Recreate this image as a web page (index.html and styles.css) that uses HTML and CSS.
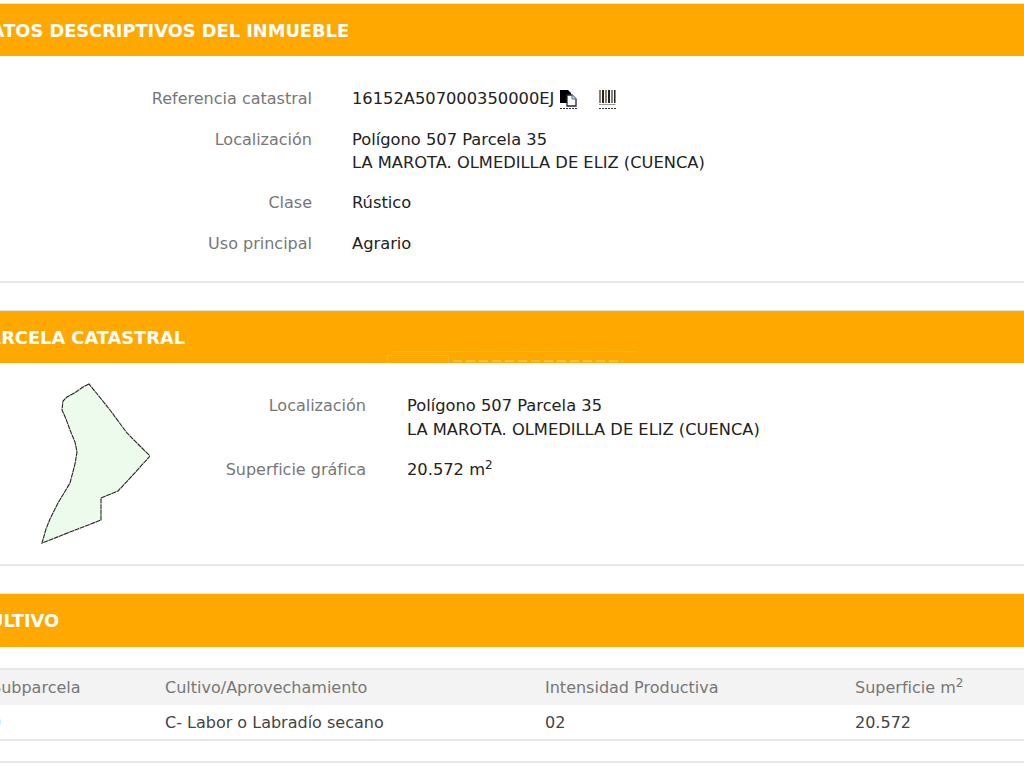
FILE: index.html
```html
<!DOCTYPE html>
<html lang="es">
<head>
  <meta charset="UTF-8" />
  <title>Datos descriptivos del inmueble</title>
  <link rel="stylesheet" href="styles.css">
</head>
<body>
  <div class="page">
    <section class="panel panel-datos">
      <h2 class="panel-title">DATOS DESCRIPTIVOS DEL INMUEBLE</h2>
      <div class="fields">
        <div class="field">
          <span class="label">Referencia catastral</span>
          <div class="value ref">
            <span>16152A507000350000EJ</span>
            <svg class="icon" viewBox="0 0 19 20" width="19" height="20">
              <path d="M1 1h8l3 3v10H1z" fill="#000"/>
              <path d="M8 6h5l4 4v7H8z" fill="#fff" stroke="#1c2740" stroke-width="1.3"/>
              <path d="M13 6v4h4" fill="#dfe8f5" stroke="#3a66b0" stroke-width="1"/>
              <path d="M1 19.5h17" stroke="#333" stroke-width="1" stroke-dasharray="2 1"/>
            </svg>
            <svg class="icon icon-barcode" viewBox="0 0 18 20" width="18" height="20">
              <path d="M1 1h2v13H1zM7 1h2v13H7zM13 1h2v13h-2z" fill="#8a7f70"/>
              <path d="M4 1h2v13H4zM10 1h2v13h-2zM16 1h1.500v13H16z" fill="#222"/>
              <path d="M1 15.500h16.500" stroke="#999" stroke-width="1"/>
              <path d="M1 19.500h17" stroke="#333" stroke-width="1" stroke-dasharray="2 1"/>
            </svg>
          </div>
        </div>
        <div class="field">
          <span class="label">Localización</span>
          <div class="value">Polígono 507 Parcela 35<br>LA MAROTA. OLMEDILLA DE ELIZ (CUENCA)</div>
        </div>
        <div class="field">
          <span class="label">Clase</span>
          <div class="value">Rústico</div>
        </div>
        <div class="field">
          <span class="label">Uso principal</span>
          <div class="value">Agrario</div>
        </div>
      </div>
    </section>

    <section class="panel panel-parcela">
      <h2 class="panel-title">PARCELA CATASTRAL</h2>
      <div class="watermark">
        <div class="watermark-box"></div>
        <div class="watermark-letters"></div>
      </div>
      <div class="parcela-body">
        <svg class="plano" viewBox="0 0 130 170" width="130" height="170">
          <path d="M69 5 L63 8 L56 13 L47 18 L43 22 L42 31 L46 40 L50 51 L55 63 L57 73 L55 85 L50 104 L38 124 L30 140 L26 150 L22 164 L81 141 L81 119 L98 112 L112 97 L130 77 L118 65 L107 54 L90 31 L78 16 Z" fill="#edfbed" stroke="#222" stroke-width="1.1" stroke-dasharray="5 0.6"/>
        </svg>
        <div class="fields fields-parcela">
          <div class="field">
            <span class="label">Localización</span>
            <div class="value">Polígono 507 Parcela 35<br>LA MAROTA. OLMEDILLA DE ELIZ (CUENCA)</div>
          </div>
          <div class="field">
            <span class="label">Superficie gráfica</span>
            <div class="value">20.572 m<sup>2</sup></div>
          </div>
        </div>
      </div>
    </section>

    <section class="panel panel-cultivo">
      <h2 class="panel-title title-cultivo">CULTIVO</h2>
      <div class="cultivo-table">
        <div class="row row-head">
          <span>Subparcela</span>
          <span>Cultivo/Aprovechamiento</span>
          <span>Intensidad Productiva</span>
          <span>Superficie m<sup>2</sup></span>
        </div>
        <div class="row row-body">
          <span class="sub-link">0</span>
          <span>C- Labor o Labradío secano</span>
          <span>02</span>
          <span>20.572</span>
        </div>
      </div>
    </section>
    <div class="panel-end"></div>
  </div>
</body>
</html>
```

FILE: styles.css
```css
html, body {
  margin: 0;
  padding: 0;
  height: 768px;
  overflow: hidden;
  background: #fff;
}

.page {
  width: 1120px;
  margin-left: -40px;
  padding-top: 3px;
  font-family: "DejaVu Sans", Verdana, sans-serif;
  font-size: 16px;
  color: #222;
}

.panel {
  position: relative;
  border-bottom: 2px solid #e8e8e8;
  margin-bottom: 27px;
}

.panel-title {
  margin: 0;
  height: 52px;
  line-height: 53px;
  padding-left: 16px;
  background: #ffa800;
  border-top: 1px solid #e6e6e6;
  color: #fff;
  font-size: 17.8px;
  font-weight: bold;
}

.title-cultivo {
  height: 53px;
}

.fields {
  display: flex;
  flex-direction: column;
  padding: 31px 0 26px;
  gap: 17.5px;
}

.field {
  display: flex;
  gap: 40px;
  line-height: 23px;
}

.label {
  width: 352px;
  text-align: right;
  color: #777;
}

.value {
  font-size: 16.3px;
}

.ref {
  display: flex;
  align-items: center;
}

.icon {
  margin-left: 5px;
}

.icon-barcode {
  margin-left: 20px;
}

sup {
  font-size: 12px;
  line-height: 0;
}

.watermark {
  position: absolute;
  left: 433px;
  top: 41px;
  width: 244px;
  height: 12px;
  border-top: 1px solid rgba(255, 255, 255, 0.14);
}

.watermark-box {
  position: absolute;
  left: -6px;
  top: 3px;
  width: 60px;
  height: 7px;
  border: 1px solid rgba(255, 255, 255, 0.16);
  border-bottom: none;
}

.watermark-letters {
  position: absolute;
  left: 60px;
  top: 8px;
  width: 170px;
  height: 2px;
  background: repeating-linear-gradient(90deg, rgba(255, 255, 255, 0.25) 0 9px, transparent 9px 13px);
}

.parcela-body {
  display: flex;
  height: 201px;
}

.plano {
  margin: 16px 0 0 60px;
}

.fields-parcela {
  padding-top: 31px;
  gap: 16px;
}

.fields-parcela .field {
  gap: 41px;
  line-height: 24px;
}

.fields-parcela .label {
  width: 216px;
}

.cultivo-table {
  margin-top: 21px;
  border-top: 2px solid #e8e8e8;
}

.panel-cultivo {
  margin-bottom: 20px;
}

.row {
  display: grid;
  grid-template-columns: 205px 380px 310px 1fr;
  height: 35px;
  line-height: 35px;
  color: #444;
}

.row-body {
  height: 34px;
}

.row > span:first-child {
  padding-left: 31px;
}

.row-head {
  background: #f3f3f3;
  color: #777;
}

.sub-link {
  color: #6fb9b9;
}

.panel-end {
  border-top: 2px solid #e8e8e8;
}
```
